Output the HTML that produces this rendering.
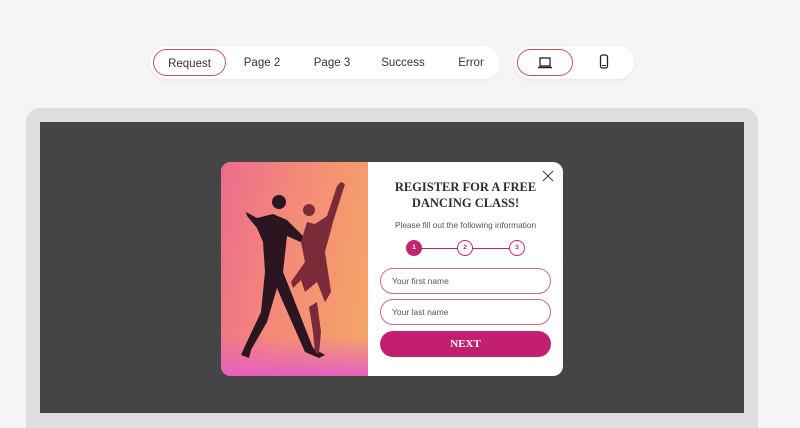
<!DOCTYPE html>
<html><head><style>
*{margin:0;padding:0;box-sizing:border-box}
html,body{width:800px;height:428px;overflow:hidden}
body{background:#f5f5f5;font-family:"Liberation Sans",sans-serif;position:relative}
.pill{position:absolute;top:46px;height:33px;background:#fff;border-radius:17px;box-shadow:0 1px 3px rgba(0,0,0,.06)}
.tab{position:absolute;top:3px;height:27px;line-height:28px;font-size:11.5px;color:#333;text-align:center}
.act{border:1.5px solid #c0554f;border-radius:14px}
.frame{position:absolute;left:26px;top:108px;width:732px;height:340px;background:#e0dfe0;border-radius:14px}
.inner{position:absolute;left:40px;top:122px;width:704px;height:291px;background:#464546}
.modal{position:absolute;left:221px;top:162px;width:342px;height:214px;background:#fff;border-radius:10px;overflow:hidden}
.img{position:absolute;left:0;top:0;width:147px;height:214px;background:linear-gradient(100deg,#ec6c8c 0%,#f48a78 45%,#f5a765 100%)}
.serif{font-family:"Liberation Serif",serif}
.inp{position:absolute;left:159px;width:171px;height:26px;border:1px solid #c86a94;border-radius:13px;font-size:8.5px;color:#555;padding-left:11px;line-height:24px}
.step{position:absolute;top:78px;width:16px;height:16px;border-radius:50%;border:1.2px solid #c2256f;font-size:6.5px;line-height:14px;text-align:center;color:#c2256f;font-weight:bold}
</style></head><body>
<div class="pill" style="left:150px;width:350px">
<div class="tab act" style="left:3px;width:73px">Request</div>
<div class="tab" style="left:82px;width:60px">Page 2</div>
<div class="tab" style="left:152px;width:60px">Page 3</div>
<div class="tab" style="left:222px;width:62px">Success</div>
<div class="tab" style="left:292px;width:58px">Error</div>
</div>
<div class="pill" style="left:514px;width:120px">
<div class="tab act" style="left:3px;width:56px"><svg width="16" height="14" viewBox="0 0 16 14" style="margin-top:6px"><rect x="3" y="2" width="10" height="8" fill="none" stroke="#222" stroke-width="1.3"/><path d="M1 11.5H15" stroke="#222" stroke-width="1.5"/></svg></div>
<div class="tab" style="left:78px;width:24px"><svg width="10" height="16" viewBox="0 0 10 16" style="margin-top:5px"><rect x="1.5" y="1" width="7" height="13" rx="2" fill="none" stroke="#222" stroke-width="1.3"/><path d="M3 11.5H7" stroke="#222"/></svg></div>
</div>
<div class="frame"></div>
<div class="inner"></div>
<div style="position:absolute;left:40px;top:262px;width:704px;height:1px;background:#4b4a4b"></div>
<div class="modal">
<div class="img">
<div style="position:absolute;left:0;bottom:0;width:147px;height:40px;background:linear-gradient(180deg,rgba(240,120,200,0),#e65fc0)"></div>
<svg width="147" height="214" viewBox="0 0 147 214" style="position:absolute;left:0;top:0">
<g fill="#2a1520">
<circle cx="58" cy="40" r="7"/>
<path d="M25 50L36 56L52 52L66 58L86 78L84 82L66 74L62 110L70 130L92 186L104 193L98 196L84 190L62 140L56 126L46 160L30 188L28 196L20 193L24 184L40 150L44 110L42 80L36 66L26 54Z"/>
</g>
<g fill="#7a2a38">
<circle cx="88" cy="48" r="6"/>
<path d="M120 20L124 22L112 60L104 90L110 130L104 140L96 120L84 130L80 118L72 126L70 120L84 100L80 80L86 60L94 62L106 54L116 24Z"/>
<path d="M96 140L100 170L98 192L94 190L92 170L88 145Z"/>
</g>
</svg>
</div>
<svg width="12" height="12" viewBox="0 0 12 12" style="position:absolute;right:9px;top:8px"><path d="M1 1L11 11M11 1L1 11" stroke="#444" stroke-width="1.1"/></svg>
<div class="serif" style="position:absolute;left:147px;width:195px;top:18px;text-align:center;font-weight:bold;font-size:12.5px;line-height:15.5px;color:#2d2d2d">REGISTER FOR A FREE<br>DANCING CLASS!</div>
<div style="position:absolute;left:147px;width:195px;top:58px;text-align:center;font-size:8.3px;color:#555">Please fill out the following information</div>
<div style="position:absolute;left:192px;top:86px;width:103px;height:1px;background:#c2256f"></div>
<div class="step" style="left:185px;background:#c2256f;color:#fff">1</div>
<div class="step" style="left:236px;background:#fff">2</div>
<div class="step" style="left:288px;background:#fff">3</div>
<div class="inp" style="top:106px">Your first name</div>
<div class="inp" style="top:137px">Your last name</div>
<div class="serif" style="position:absolute;left:159px;top:169px;width:171px;height:26px;border-radius:13px;background:#c2206f;color:#fff;font-weight:bold;font-size:11px;text-align:center;line-height:27px">NEXT</div>
</div>
</body></html>
